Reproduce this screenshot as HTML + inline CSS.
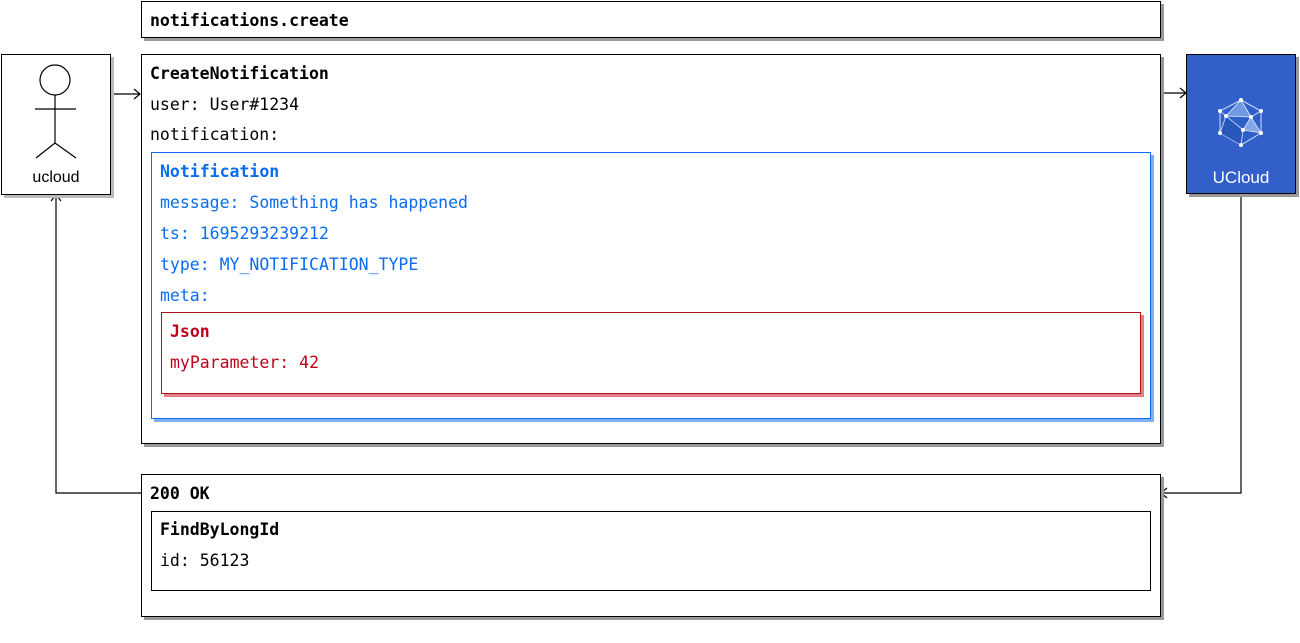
<!DOCTYPE html>
<html><head><meta charset="utf-8"><style>
body{margin:0;width:1300px;height:643px;background:#fff;position:relative;overflow:hidden;font-family:"DejaVu Sans Mono","Liberation Mono",monospace;font-size:16.5px;}
.b{position:absolute;box-sizing:border-box;border:1.3px solid #000;background:#fff;box-shadow:3px 3px 0 #999;}
.t{position:absolute;white-space:pre;line-height:20px;margin-top:1px;}
.bold{font-weight:bold}
.blue{color:#0a6cf0}.red{color:#c0001a}
</style></head><body>
<svg style="position:absolute;left:0;top:0" width="1300" height="643">
<g stroke="#000" fill="none" stroke-width="1.2">
<path d="M110 94H140M134 89L140 94L134 99"/>
<path d="M1160 93H1186M1180 88L1186 93L1180 98"/>
<path d="M1241 193V493H1161M1167 488L1161 493L1167 498"/>
<path d="M141 493H56V195M51 201L56 195L61 201"/>
</g>
</svg>
<div class="b" style="left:141px;top:1px;width:1020px;height:37px"></div>
<div class="t bold" style="left:150px;top:10px">notifications.create</div>

<div class="b" style="left:1px;top:54px;width:110px;height:141px;box-shadow:3px 3px 0 #bbb"></div>
<svg style="position:absolute;left:1px;top:54px" width="110" height="141">
<g stroke="#000" fill="none" stroke-width="1.2">
<circle cx="54" cy="26" r="15"/><path d="M54 41V89M34 55H75M35 104L54 89L75 104"/>
</g></svg>
<div class="t" style="left:1px;top:167px;width:110px;text-align:center;font-family:'Liberation Sans',sans-serif;font-size:16px">ucloud</div>

<div class="b" style="left:141px;top:54px;width:1020px;height:390px"></div>
<div class="t bold" style="left:150px;top:63px">CreateNotification</div>
<div class="t" style="left:150px;top:94px">user: User#1234</div>
<div class="t" style="left:150px;top:124px">notification:</div>

<div class="b" style="left:151px;top:152px;width:1000px;height:267px;border-color:#0a6cf0;box-shadow:3px 3px 0 #80b0f0"></div>
<div class="t bold blue" style="left:160px;top:161px">Notification</div>
<div class="t blue" style="left:160px;top:192px">message: Something has happened</div>
<div class="t blue" style="left:160px;top:223px">ts: 1695293239212</div>
<div class="t blue" style="left:160px;top:254px">type: MY_NOTIFICATION_TYPE</div>
<div class="t blue" style="left:160px;top:285px">meta:</div>

<div class="b" style="left:161px;top:312px;width:980px;height:82px;border-color:#b0101a;box-shadow:3px 3px 0 #e08088"></div>
<div class="t bold red" style="left:170px;top:321px">Json</div>
<div class="t red" style="left:170px;top:352px">myParameter: 42</div>

<div class="b" style="left:1186px;top:54px;width:110px;height:140px;background:#3360c8"></div>
<svg style="position:absolute;left:1216px;top:97px" width="50" height="52">
<polygon points="25,3 45,14 45,36 25,48 4,36 4,14" fill="#2f5fc9" stroke="#cfe0ff" stroke-width="1"/>
<polygon points="25,3 35,20 10,19" fill="#8fb2ee" opacity=".7"/>
<polygon points="35,20 45,36 27,33" fill="#a9c6f5" opacity=".7"/>
<polygon points="10,19 27,33 25,48 4,36" fill="#2555b8" opacity=".8"/>
<g stroke="#dfe9ff" stroke-width=".8" fill="none"><path d="M25 3L35 20L10 19L25 3M35 20L45 14M35 20L27 33L10 19L4 36M27 33L45 36M27 33L25 48M10 19L4 14M35 20L45 36"/></g>
<g fill="#fff"><circle cx="25" cy="3" r="2"/><circle cx="45" cy="14" r="2"/><circle cx="45" cy="36" r="2"/><circle cx="25" cy="48" r="2"/><circle cx="4" cy="36" r="2"/><circle cx="4" cy="14" r="2"/><circle cx="35" cy="20" r="2"/><circle cx="10" cy="19" r="2"/><circle cx="27" cy="33" r="2"/></g>
</svg>
<div class="t" style="left:1186px;top:167px;width:110px;text-align:center;color:#fff;font-family:'Liberation Sans',sans-serif;font-size:17px">UCloud</div>

<div class="b" style="left:141px;top:474px;width:1020px;height:143px"></div>
<div class="t bold" style="left:150px;top:483px">200 OK</div>
<div class="b" style="left:151px;top:511px;width:1000px;height:80px;box-shadow:none"></div>
<div class="t bold" style="left:160px;top:519px">FindByLongId</div>
<div class="t" style="left:160px;top:550px">id: 56123</div>
</body></html>
